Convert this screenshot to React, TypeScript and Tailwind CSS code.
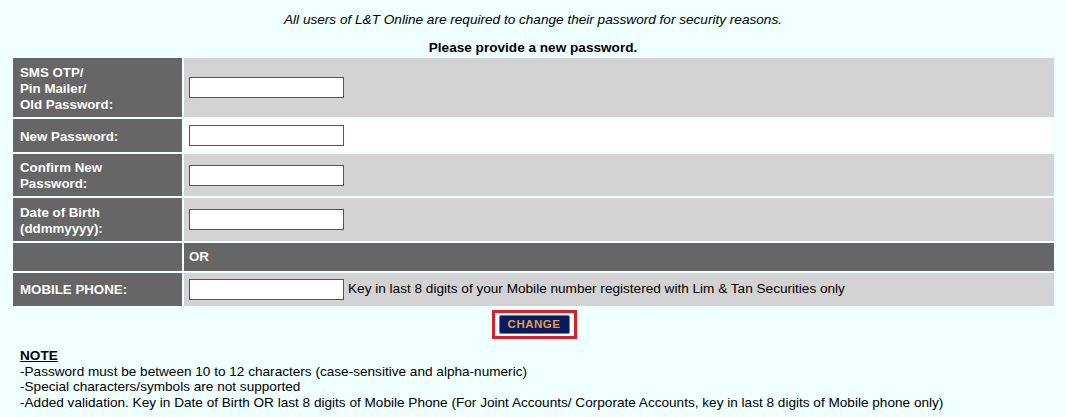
import React from 'react';

const rows = [
  { label: ['SMS OTP/', 'Pin Mailer/', 'Old Password:'], h: 'h-[59px]', bg: 'bg-[#d3d3d3]' },
  { label: ['New Password:'], h: 'h-[33px]', bg: 'bg-white' },
  { label: ['Confirm New', 'Password:'], h: 'h-[42px]', bg: 'bg-[#d3d3d3]' },
  { label: ['Date of Birth', '(ddmmyyyy):'], h: 'h-[43px]', bg: 'bg-[#d3d3d3]' },
];

function TextBox() {
  return (
    <input
      type="text"
      className="h-[21px] w-[155px] border border-[#555] bg-white px-1 align-middle text-[13px] outline-none"
    />
  );
}

export default function App() {
  return (
    <div className="min-h-[417px] w-[1066px] bg-[#f0ffff] font-['Liberation_Sans',Arial,sans-serif] text-[13.6px] text-black">
      <p className="pt-[12px] text-center italic leading-[16px]">
        All users of L&amp;T Online are required to change their password for security reasons.
      </p>
      <p className="mt-[12px] text-center font-bold leading-[16px]">Please provide a new password.</p>

      <table className="ml-[11px] mt-[0px] w-[1045px] border-separate border-spacing-[2px]">
        <tbody>
          {rows.map((r, i) => (
            <tr key={i} className={r.h}>
              <td className="w-[169px] bg-[#666666] px-[7px] pt-[2px] align-middle text-[13.3px] font-bold leading-[16px] text-white">
                {r.label.map((l) => (
                  <div key={l}>{l}</div>
                ))}
              </td>
              <td className={`${r.bg} px-[5px] align-middle`}>
                <TextBox />
              </td>
            </tr>
          ))}
          <tr className="h-[28px]">
            <td className="bg-[#666666]" />
            <td className="bg-[#666666] px-[5px] align-middle text-[13.3px] font-bold text-white">OR</td>
          </tr>
          <tr className="h-[33px]">
            <td className="bg-[#666666] px-[7px] align-middle text-[13.3px] font-bold text-white">MOBILE PHONE:</td>
            <td className="bg-[#d3d3d3] px-[5px] align-middle">
              <TextBox />
              <span className="ml-[4px] align-middle">
                Key in last 8 digits of your Mobile number registered with Lim &amp; Tan Securities only
              </span>
            </td>
          </tr>
        </tbody>
      </table>

      <div className="mt-[2px] flex justify-center">
        <div className="ml-[2px] border-[3px] border-[#d7202a] bg-[#f0ffff] px-[4px] py-[2px]">
          <button className="flex h-[19px] w-[71px] items-center justify-center rounded-[2px] border border-[#6b7bb0] bg-[#0a1a5c] text-[11.5px] font-bold leading-none tracking-[0.5px] text-[#e0a050]">
            CHANGE
          </button>
        </div>
      </div>

      <div className="ml-[20px] mt-[9px] leading-[15.6px]">
        <div className="font-bold underline">NOTE</div>
        <div>-Password must be between 10 to 12 characters (case-sensitive and alpha-numeric)</div>
        <div>-Special characters/symbols are not supported</div>
        <div>
          -Added validation. Key in Date of Birth OR last 8 digits of Mobile Phone (For Joint Accounts/ Corporate
          Accounts, key in last 8 digits of Mobile phone only)
        </div>
      </div>
    </div>
  );
}
